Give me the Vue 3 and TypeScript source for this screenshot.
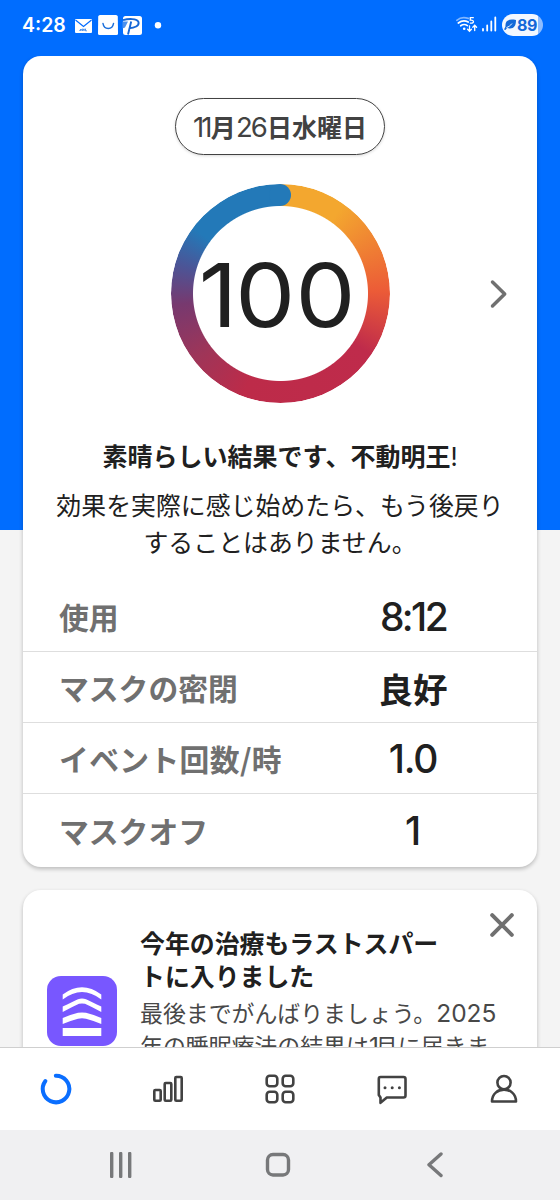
<script setup lang="ts">
interface Metric {
  label: string
  value: string
  kind: string
}

const metrics: Metric[] = [
  { label: '使用', value: '8:12', kind: 'time' },
  { label: 'マスクの密閉', value: '良好', kind: 'word' },
  { label: 'イベント回数/時', value: '1.0', kind: 'decimal' },
  { label: 'マスクオフ', value: '1', kind: 'digit' },
]
</script>

<template>
  <div class="screen">
    <header class="status">
      <span class="clock">4:28</span>
      <svg class="notices" width="90" height="24" viewBox="74 13 90 24">
        <rect x="75" y="19" width="17" height="14" rx="1" fill="#fff" />
        <path d="M75.5 20l8 6.5 8-6.5" fill="none" stroke="#006aff" stroke-width="1.2" />
        <path d="M79.5 30.8l1.2-1.6v1.6l1.6-2v2l1.6-2v2l1.6-2v2h1.4" fill="none" stroke="#3b86e8" stroke-width=".9" />
        <path d="M100 15h16q1.500 0 1.800 1.500l.2 17q0 1.500-1.500 1.500h-17q-1.500 0-1.500-1.500l.2-17q.3-1.500 1.800-1.500z" fill="#fff" />
        <path d="M103 23.500c1 6.500 9.500 6.500 10.500 0" fill="none" stroke="#1b6fdb" stroke-width="1.500" stroke-linecap="round" />
        <rect x="123" y="16" width="19" height="19" rx="2.500" fill="#fff" />
        <path d="M123 20.200c5-1.500 14-2 15.500 1.800 1 4-4 6-9.500 6.300M131.200 21.500L128 34.500" fill="none" stroke="#1566d6" stroke-width="1.900" />
        <path d="M122.500 21.500h5.500l-3 6-2.500 1z" fill="#4a90ee" />
        <circle cx="158" cy="25.300" r="3.200" fill="#fff" />
      </svg>
      <span class="grow"></span>
      <svg class="signal" width="44" height="22" viewBox="454 15 44 22">
        <g fill="none" stroke="#fff" stroke-width="1.700" stroke-linecap="round">
          <path d="M456.800 21.300c3-2.600 7.700-3.200 11.500-1.900" opacity=".5" />
          <path d="M458.300 24c3-2.200 7-2.500 9.900-.9M460.700 26.800c2-1.500 4.800-1.500 6.700-.2" />
          <path d="M473.300 18.700h-3v2.500c4.200-.7 4.200 3.600 0 2.900" stroke-width="1.300" />
          <path d="M469.500 27v5.200m-1.900-1.900l1.900 2 1.900-2M474.700 31.500v-5.200m-1.900 1.900l1.900-2 1.900 2" stroke-width="1.300" />
          <path d="M483 30v1.500M487.200 26.500v5M491.300 22.500v9M495.300 18.500v13" stroke-width="1.800" />
        </g>
        <circle cx="464.200" cy="29.800" r="1.300" fill="#fff" />
      </svg>
      <div class="battery">
        <svg width="12" height="12" viewBox="0 0 12 12">
          <path d="M12 1C4-.5 1 2 1.500 7.500L0 10.500l1.500.5 1.500-2C9 10.500 12 8 12 1z" fill="#1468d8" />
          <path d="M2.500 8.500c2-.5 4-2 5.500-4" stroke="#eef5ff" stroke-width="1" fill="none" />
        </svg>
        <span>89</span>
      </div>
    </header>

    <main class="feed">
      <section class="card score">
        <div class="date"><span class="n ones">11</span>月<span class="n twenty">26</span>日水曜日</div>
        <div class="dial">
          <div class="ring"></div>
          <svg class="total" width="170" height="140" viewBox="195 224 170 140">
            <text transform="scale(1.080 1)" y="327" x="184 217.800 273.600">100</text>
          </svg>
          <svg class="chevron" width="18" height="30" viewBox="0 0 18 30">
            <path d="M2.500 3l12.200 12L2.500 27" />
          </svg>
        </div>
        <h1>素晴らしい結果です、不動明王<span class="bang">!</span></h1>
        <p class="lead">効果を実際に感じ始めたら、もう後戻り<br />することはありません。</p>
        <ul>
          <li v-for="m in metrics" :key="m.label" :class="m.kind">
            <span class="label">{{ m.label }}</span>
            <span class="value">{{ m.value }}</span>
          </li>
        </ul>
      </section>

      <section class="card news">
        <svg class="badge" width="70" height="70" viewBox="0 0 70 70">
          <rect width="70" height="70" rx="14" fill="#7857ff" />
          <g fill="#fff">
            <path d="M15.700 18.500Q35 4 54.300 18.500V23.500Q35 8.500 15.700 23.500z" />
            <path d="M15.700 30.500Q25 26 31 23.200Q35 22 39 23.200Q45 26 54.300 30.500V36Q45 31 38 27.800Q35 27 32 27.800Q25 31 15.700 36z" />
            <path d="M15.700 42Q24 38.500 31 36.800Q35 36 39 36.800Q46 38.500 54.300 42V48Q46 44.500 39 42.700Q35 42 31 42.700Q24 44.500 15.700 48z" />
            <rect x="15.700" y="52" width="38.600" height="8" />
          </g>
        </svg>
        <div class="copy">
          <h2>今年の治療もラストスパー<br />トに入りました</h2>
          <p>最後までがんばりましょう。<span class="year">2025</span><br />年の睡眠療法の結果は<span class="one">1</span>月に届きま</p>
        </div>
        <svg class="close" width="26" height="26" viewBox="0 0 26 26">
          <path d="M3.200 3.200l19.600 19.600M22.800 3.200L3.200 22.800" />
        </svg>
      </section>
    </main>

    <nav class="tabs">
      <svg viewBox="0 0 36 36" class="active"><path d="M17.800 4.700A13.300 13.300 0 1 1 7.400 10" /></svg>
      <svg viewBox="0 0 36 36">
        <rect x="4.300" y="19" width="6.400" height="10.700" rx="1" />
        <rect x="14.700" y="12" width="6.600" height="17.700" rx="1" />
        <rect x="25.300" y="6" width="6.400" height="23.700" rx="1" />
      </svg>
      <svg viewBox="0 0 36 36">
        <rect x="4.700" y="4.700" width="10.600" height="10.600" rx="3" />
        <rect x="20.700" y="4.700" width="10.600" height="10.600" rx="3" />
        <rect x="4.700" y="20.700" width="10.600" height="10.600" rx="3" />
        <rect x="20.700" y="20.700" width="10.600" height="10.600" rx="3" />
      </svg>
      <svg viewBox="0 0 36 36">
        <path d="M6.500 6h23q2 0 2 2v16.500q0 2-2 2H12.800l-6.300 5.300V26.500L4.800 24V8q0-2 1.700-2z" />
        <g class="dots"><circle cx="11" cy="16.700" r="1.500" /><circle cx="18.200" cy="16.700" r="1.500" /><circle cx="25.400" cy="16.700" r="1.500" /></g>
      </svg>
      <svg viewBox="0 0 36 36">
        <circle cx="18" cy="11.600" r="6.600" />
        <path d="M6 30.500C6 14.700 30 14.700 30 30.500z" />
      </svg>
    </nav>

    <footer class="system">
      <svg width="24" height="26" viewBox="0 0 24 26"><path d="M2.700 1.500v23M11.700 1.500v23M20.700 1.500v23" /></svg>
      <svg width="26" height="26" viewBox="0 0 26 26"><rect x="2.500" y="2.500" width="21" height="20.500" rx="5.500" /></svg>
      <svg width="18" height="26" viewBox="0 0 18 26"><path d="M15 2L3 12.800 15 23.500" /></svg>
    </footer>
  </div>
</template>

<style>
body {
  margin: 0;
}
</style>

<style scoped>
.screen {
  width: 560px;
  height: 1200px;
  display: flex;
  flex-direction: column;
  overflow: hidden;
  background: linear-gradient(#006dff 530px, #f4f4f4 530px);
  font-family: "Noto Sans CJK JP", sans-serif;
  color: #202020;
}

.status {
  flex: none;
  display: flex;
  align-items: center;
  box-sizing: border-box;
  height: 56px;
  padding: 0 17px 6px 22px;
  color: #fff;
}

.clock {
  width: 52px;
  font: 600 19.500px/24px Inter, sans-serif;
}

.grow {
  flex: 1;
}

.signal {
  margin: 0 4px 0 0;
}

.battery {
  display: flex;
  align-items: center;
  justify-content: center;
  gap: 1px;
  box-sizing: border-box;
  width: 41px;
  height: 22px;
  padding-right: 4px;
  border-radius: 11px;
  background: linear-gradient(90deg, #f2f7ff 36px, #8dbcff 36px);
  color: #1468d8;
  font: 700 16px/22px Inter, sans-serif;
  letter-spacing: -.5px;
}

.feed {
  flex: 1;
  min-height: 0;
  overflow: hidden;
}

.card {
  box-sizing: border-box;
  width: 514px;
  margin: 0 auto;
  border-radius: 18px;
  background: #fff;
  box-shadow: 0 2px 4px rgba(0, 0, 0, .24);
}

.score {
  height: 811px;
  padding-top: 42px;
}

.date {
  display: flex;
  align-items: center;
  justify-content: center;
  box-sizing: border-box;
  width: 210px;
  height: 57px;
  margin: 0 auto 29px;
  padding-bottom: 2px;
  border: 1.500px solid #424242;
  border-radius: 29px;
  box-shadow: 0 1px 3px rgba(0, 0, 0, .15);
  color: #424242;
  font-size: 25px;
  font-weight: 700;
}

.n {
  position: relative;
  top: 1px;
  font-family: Inter, sans-serif;
  font-size: 27.500px;
  font-weight: 420;
}

.ones {
  letter-spacing: -2.700px;
  margin-right: 1px;
}

.twenty {
  letter-spacing: -1.800px;
  margin-right: 1px;
}

.dial {
  position: relative;
  display: grid;
  place-items: center;
  height: 219px;
}

.ring {
  grid-area: 1 / 1;
  position: relative;
  width: 219px;
  height: 219px;
  border-radius: 50%;
  background: conic-gradient(#f3a72f 0deg, #f3a72f 35deg, #ec5c37 88deg, #bf2b4b 124deg, #bd2b49 200deg, #9f3558 232deg, #77396f 264deg, #4b5597 286deg, #2379b8 307deg, #2379b8 360deg);
  -webkit-mask: radial-gradient(circle, transparent 87px, #000 88px);
  mask: radial-gradient(circle, transparent 87px, #000 88px);
}

.ring::after {
  content: "";
  position: absolute;
  left: 98.500px;
  top: 0;
  width: 22px;
  height: 22px;
  border-radius: 50%;
  background: #2379b8;
}

.total {
  grid-area: 1 / 1;
}

.total text {
  font: 430 88px Inter, sans-serif;
  fill: #202020;
}

.chevron {
  position: absolute;
  right: 29px;
  top: 95px;
}

.chevron path,
.close path {
  fill: none;
  stroke: #707070;
  stroke-width: 3.500;
  stroke-linecap: round;
  stroke-linejoin: round;
}

h1 {
  margin: 34px 0 10px;
  font-size: 25px;
  line-height: 37px;
  font-weight: 700;
  text-align: center;
  white-space: nowrap;
}

.bang {
  font-family: Inter, sans-serif;
  font-weight: 400;
}

.lead {
  margin: 0;
  font-size: 24.900px;
  line-height: 37px;
  font-weight: 400;
  text-align: center;
  white-space: nowrap;
}

ul {
  margin: 21px 0 0;
  padding: 0;
  list-style: none;
}

li {
  display: flex;
  align-items: center;
  box-sizing: border-box;
  height: 71px;
  border-bottom: 1px solid #dedede;
}

li:last-child {
  border: 0;
}

.label {
  width: 264px;
  padding-left: 36px;
  color: #707070;
  font-size: 29.800px;
  line-height: 44px;
  font-weight: 700;
  white-space: nowrap;
}

.decimal .label {
  letter-spacing: .35px;
}

.value {
  width: 180px;
  padding-top: 2px;
  text-align: center;
  font: 480 39px/48px Inter, sans-serif;
}

.word .value {
  font: 700 34.500px/48px "Noto Sans CJK JP", sans-serif;
}

.time .value {
  letter-spacing: -2.600px;
}

.decimal .value {
  letter-spacing: -1.200px;
}

.news {
  display: flex;
  position: relative;
  height: 200px;
  margin-top: 23px;
  padding: 36px 0 0 24px;
}

.badge {
  flex: none;
  margin: 50px 23px 0 0;
}

h2 {
  margin: 0;
  font-size: 24.900px;
  line-height: 33px;
  font-weight: 700;
  white-space: nowrap;
}

.copy p {
  margin: 4px 0 0;
  color: #484848;
  font-size: 22.900px;
  line-height: 33px;
  font-weight: 400;
  white-space: nowrap;
}

.year,
.one {
  font-family: Inter, sans-serif;
  font-size: 24.500px;
  line-height: 1;
}

.one {
  letter-spacing: -4px;
}

.close {
  position: absolute;
  right: 22.500px;
  top: 22px;
}

.close path {
  stroke-width: 4;
}

.tabs {
  flex: none;
  display: grid;
  grid-template-columns: repeat(5, 1fr);
  place-items: center;
  box-sizing: border-box;
  height: 83px;
  border-top: 1px solid #cfcfcf;
  background: #fff;
}

.tabs svg {
  width: 36px;
  height: 36px;
  fill: none;
  stroke: #424242;
  stroke-width: 2.600;
  stroke-linecap: round;
  stroke-linejoin: round;
}

.tabs .active {
  stroke: #0a6eff;
  stroke-width: 4;
}

.tabs .dots {
  fill: #424242;
  stroke: none;
}

.system {
  flex: none;
  display: grid;
  grid-template-columns: repeat(3, 157px);
  justify-content: center;
  place-items: center;
  box-sizing: border-box;
  height: 70px;
  padding-right: 4px;
  background: #f0f0f2;
}

.system svg {
  fill: none;
  stroke: #77787a;
  stroke-width: 3.400;
  stroke-linecap: round;
  stroke-linejoin: round;
}
</style>
